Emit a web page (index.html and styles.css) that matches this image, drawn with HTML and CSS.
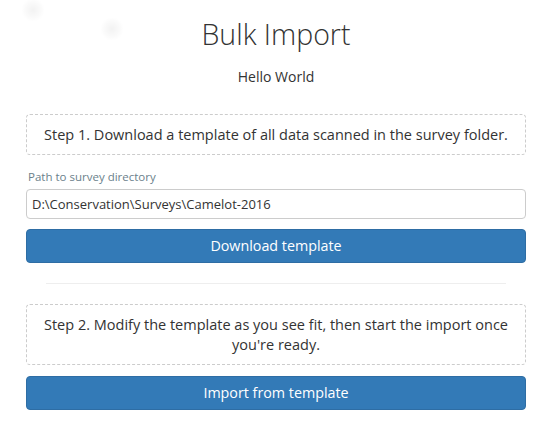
FILE: index.html
```html
<!DOCTYPE html>
<html>
<head>
<meta charset="utf-8">
<link rel="stylesheet" href="styles.css">
</head>
<body>
<div class="blob blob-a"></div>
<div class="blob blob-b"></div>
<main class="page">
  <h1 class="title">Bulk Import</h1>
  <p class="subtitle">Hello World</p>
  <div class="step">Step 1. Download a template of all data scanned in the survey folder.</div>
  <label class="field-label" for="path">Path to survey directory</label>
  <input class="field-input" id="path" type="text" value="D:\Conservation\Surveys\Camelot-2016">
  <button class="btn">Download template</button>
  <hr class="divider">
  <div class="step">Step 2. Modify the template as you see fit, then start the import once you're ready.</div>
  <button class="btn btn-gap">Import from template</button>
</main>
</body>
</html>
```
FILE: styles.css
```css
html, body {
  margin: 0;
  padding: 0;
  background: #fff;
}
body {
  font-family: "Open Sans", "Liberation Sans", sans-serif;
  color: #333;
  font-size: 14px;
  line-height: 20px;
}
.blob {
  position: absolute;
  width: 24px;
  height: 24px;
  border-radius: 50%;
  background: radial-gradient(circle, rgba(0,0,0,0.05) 0%, rgba(0,0,0,0.02) 45%, rgba(0,0,0,0) 70%);
}
.blob-a { left: 21px; top: -2px; }
.blob-b { left: 100px; top: 17px; }
.page {
  width: 500px;
  margin-left: 26px;
  display: flex;
  flex-direction: column;
}
.title {
  margin: 18px 0 0;
  font-size: 28.5px;
  font-weight: 300;
  line-height: 33px;
  text-align: center;
  color: #333;
}
.subtitle {
  margin: 16px 0 0;
  text-align: center;
}
.step {
  margin-top: 27px;
  border: 1px dashed #ccc;
  border-radius: 4px;
  padding: 10px 10px 9px;
  font-size: 14.5px;
  text-align: center;
}
.field-label {
  margin-top: 14px;
  font-size: 11.5px;
  line-height: 15px;
  color: #6b7f8b;
  padding-left: 2px;
}
.field-input {
  margin-top: 5px;
  box-sizing: border-box;
  height: 30px;
  width: 100%;
  border: 1px solid #ccc;
  border-radius: 4px;
  padding: 0 5px;
  font-family: inherit;
  font-size: 13px;
  color: #333;
  background: #fff;
}
.btn {
  margin-top: 10px;
  box-sizing: border-box;
  height: 34px;
  width: 100%;
  background: #337ab7;
  border: 1px solid #2e6da4;
  border-radius: 4px;
  color: #fff;
  font-family: inherit;
  font-size: 14.3px;
  line-height: 20px;
  padding: 6px 12px;
}
.btn-gap { margin-top: 11px; }
.divider {
  margin: 20px 20px 0;
  border: 0;
  border-top: 1px solid #eee;
  height: 0;
}
.divider + .step { margin-top: 20px; }
```
